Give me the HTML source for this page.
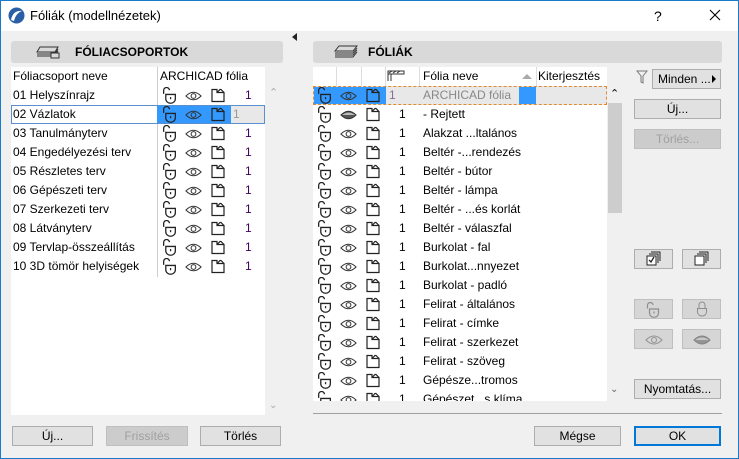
<!DOCTYPE html>
<html><head><meta charset="utf-8"><style>
*{margin:0;padding:0;box-sizing:border-box}
body{width:739px;height:459px;overflow:hidden;font-family:"Liberation Sans",sans-serif;font-size:12px;color:#000;background:#f0f0f0;position:relative}
.a{position:absolute}
.frame{left:0;top:0;width:739px;height:459px;border:1px solid #1979ca;pointer-events:none}
.title{left:0;top:0;width:739px;height:31px;background:#fff}
.hdr{background:#d9d9d9;border-radius:3px;height:22px;font-weight:bold;font-size:12px;line-height:22px}
.btn{background:#e1e1e1;border:1px solid #adadad;text-align:center;line-height:18px;height:20px}
.dis{color:#a0a0a0;background:#cccccc;border-color:#bfbfbf}
.row{position:absolute;height:19px;line-height:19px;white-space:nowrap}
svg.i{position:absolute}
</style></head><body>
<svg width="0" height="0" style="position:absolute">
<defs>
<symbol id="lk" viewBox="0 0 16 16"><path d="M2.5 6.5 V3.5 A2.7 2.7 0 0 1 8 3" fill="none" stroke="#222" stroke-width="1.2"/><path d="M4.5 7 H13.5 V11 A4.5 4.3 0 0 1 4.5 11 Z" fill="none" stroke="#222" stroke-width="1.2"/><line x1="9" y1="9.5" x2="9" y2="11.5" stroke="#222" stroke-width="1.2"/></symbol>
<symbol id="ey" viewBox="0 0 18 12"><path d="M1 6 Q9 -2 17 6 Q9 14 1 6 Z" fill="none" stroke="#333" stroke-width="1.1"/><circle cx="9" cy="6" r="2.5" fill="none" stroke="#333" stroke-width="1.1"/></symbol>
<symbol id="eh" viewBox="0 0 18 12"><path d="M1 6 Q9 -2 17 6 Q9 14 1 6 Z" fill="#555" stroke="#333" stroke-width="1"/><path d="M2 6 Q9 1 16 6" fill="#bbb"/></symbol>
<symbol id="dc" viewBox="0 0 16 16"><path d="M2 2.5 H7 V5.5 H14 V14.5 H2 Z M7 5.5 L10 2.5 H11 L14 5.5" fill="none" stroke="#222" stroke-width="1.2"/></symbol>
</defs></svg>

<div class="a title"></div>
<svg class="a" style="left:8px;top:7px" width="17" height="17" viewBox="0 0 17 17"><circle cx="8.5" cy="8.5" r="8" fill="#2a5fa8"/><path d="M3 13 Q5 3 14 4 Q8 6 6 14 Z" fill="#fff"/></svg>
<div class="a" style="left:30px;top:8px;font-size:13px">Fóliák (modellnézetek)</div>
<div class="a" style="left:654px;top:8px;font-size:14px">?</div>
<svg class="a" style="left:709px;top:9px" width="12" height="12" viewBox="0 0 12 12"><path d="M1 1 L11 11 M11 1 L1 11" stroke="#000" stroke-width="1.1"/></svg>

<div class="a" style="left:292px;top:33px;width:0;height:0;border-top:4px solid transparent;border-bottom:4px solid transparent;border-right:5px solid #222"></div>

<!-- LEFT -->
<div class="a hdr" style="left:11px;top:41px;width:272px"><span style="position:absolute;left:64px">FÓLIACSOPORTOK</span></div>
<svg class="a" style="left:36px;top:45px" width="26" height="14" viewBox="0 0 26 14"><path d="M4 2 H22 L19 7 H1 Z M1 9 H19 L22 4 M1 11 H19 L22 6" fill="none" stroke="#333" stroke-width="1"/><rect x="15" y="8" width="8" height="5" fill="#d9d9d9" stroke="#333"/></svg>
<div class="a" style="left:11px;top:67px;width:254px;height:348px;background:#fff"></div>
<div class="a" style="left:157px;top:67px;width:1px;height:210px;background:#ccc"></div>
<div class="a" style="left:13px;top:69px">Fóliacsoport neve</div>
<div class="a" style="left:160px;top:69px">ARCHICAD fólia</div>
<div class="a" style="left:265px;top:86px;width:18px;height:329px;background:#f0f0f0"></div>
<div class="a" style="left:269px;top:86px;color:#aaa;font-size:11px">⌃</div>
<div class="a" style="left:269px;top:400px;color:#aaa;font-size:10px">⌄</div>
<div class="a" style="left:11px;top:105px;width:254px;height:19px;border:1px solid #5a8fd0"></div>
<div class="a" style="left:157px;top:106px;width:74px;height:17px;background:#3399ff"></div>
<div class="a" style="left:231px;top:106px;width:33px;height:17px;background:#e8e8e8"></div>
<div id="L"></div>

<div class="a btn" style="left:12px;top:426px;width:81px">Új...</div>
<div class="a btn dis" style="left:106px;top:426px;width:82px">Frissítés</div>
<div class="a btn" style="left:200px;top:426px;width:81px">Törlés</div>

<!-- RIGHT -->
<div class="a hdr" style="left:313px;top:41px;width:409px"><span style="position:absolute;left:55px">FÓLIÁK</span></div>
<svg class="a" style="left:334px;top:45px" width="24" height="14" viewBox="0 0 24 14"><path d="M5 1 H23 L19 6 H1 Z M1 8 H19 L23 3 M1 10 H19 L23 5 M1 12 H19 L23 7" fill="none" stroke="#333" stroke-width="1"/></svg>
<div class="a" style="left:313px;top:67px;width:294px;height:334px;background:#fff;overflow:hidden" id="R">
</div>
<div class="a" style="left:607px;top:86px;width:15px;height:315px;background:#f0f0f0"></div>
<div class="a" style="left:608px;top:103px;width:14px;height:110px;background:#cdcdcd"></div>
<div class="a" style="left:610px;top:87px;font-size:11px">⌃</div>
<div class="a" style="left:610px;top:384px;font-size:10px;color:#666">⌄</div>

<svg class="a" style="left:636px;top:70px" width="12" height="14" viewBox="0 0 12 14"><path d="M1 1 H11 L7 6 V13 L5 12 V6 Z" fill="none" stroke="#777" stroke-width="1"/></svg>
<div class="a btn" style="left:652px;top:69px;width:69px;text-align:left;padding-left:5px">Minden ...<span style="position:absolute;right:4px;top:5px;width:0;height:0;border-top:4px solid transparent;border-bottom:4px solid transparent;border-left:4px solid #000"></span></div>
<div class="a btn" style="left:634px;top:99px;width:87px">Új...</div>
<div class="a btn dis" style="left:634px;top:129px;width:87px">Törlés...</div>

<div class="a btn" style="left:634px;top:249px;width:39px"></div>
<div class="a btn" style="left:682px;top:249px;width:39px"></div>
<svg class="a" style="left:646px;top:251px" width="15" height="15" viewBox="0 0 15 15"><path d="M5 1 H14 V10 M3 3 H12 V12" fill="none" stroke="#222"/><rect x="1" y="5" width="9" height="9" fill="#fff" stroke="#222"/><path d="M3 9 L5 11 L8 6" fill="none" stroke="#222" stroke-width="1.3"/></svg>
<svg class="a" style="left:694px;top:251px" width="15" height="15" viewBox="0 0 15 15"><path d="M5 1 H14 V10 M3 3 H12 V12" fill="none" stroke="#222"/><rect x="1" y="5" width="9" height="9" fill="#fff" stroke="#222"/></svg>
<div class="a btn dis" style="left:634px;top:299px;width:39px;background:#d6d6d6"></div>
<div class="a btn dis" style="left:682px;top:299px;width:39px;background:#d6d6d6"></div>
<div class="a btn dis" style="left:634px;top:329px;width:39px;background:#d6d6d6"></div>
<div class="a btn dis" style="left:682px;top:329px;width:39px;background:#d6d6d6"></div>
<svg class="i" style="left:645px;top:302px;opacity:.4" width="16" height="16"><use href="#lk"/></svg>
<svg class="i" style="left:694px;top:301px;opacity:.4" width="16" height="16" viewBox="0 0 16 16"><path d="M5 7 V4 A3 3 0 0 1 11 4 V7" fill="none" stroke="#222"/><path d="M3.5 7.5 H12.5 V11 A4.5 4 0 0 1 3.5 11 Z" fill="none" stroke="#222"/></svg>
<svg class="i" style="left:645px;top:334px;opacity:.4" width="18" height="12"><use href="#ey"/></svg>
<svg class="i" style="left:693px;top:334px;opacity:.5" width="18" height="12"><use href="#eh"/></svg>
<div class="a btn" style="left:634px;top:379px;width:87px">Nyomtatás...</div>

<div class="a" style="left:313px;top:413px;width:409px;height:1px;background:#a0a0a0"></div>
<div class="a btn" style="left:534px;top:426px;width:87px">Mégse</div>
<div class="a btn" style="left:634px;top:426px;width:87px;border:2px solid #0078d7;line-height:16px">OK</div>
<div class="frame a"></div>

<script>
var L=["01 Helyszínrajz","02 Vázlatok","03 Tanulmányterv","04 Engedélyezési terv","05 Részletes terv","06 Gépészeti terv","07 Szerkezeti terv","08 Látványterv","09 Tervlap-összeállítás","10 3D tömör helyiségek"];
var h="";
L.forEach(function(t,i){var y=86+i*19;var sel=i==1;
h+='<div class="row" style="left:13px;top:'+y+'px">'+t+'</div>';
h+='<svg class="i" style="left:161px;top:'+(y+1)+'px" width="17" height="17"><use href="#lk"/></svg>';
h+='<svg class="i" style="left:185px;top:'+(y+4)+'px" width="17" height="12"><use href="#ey"/></svg>';
h+='<svg class="i" style="left:210px;top:'+(y+1)+'px" width="16" height="16"><use href="#dc"/></svg>';
h+='<div class="row" style="left:'+(sel?233:245)+'px;top:'+y+'px;color:'+(sel?'#999':'#400060')+'">1</div>';});
document.getElementById('L').outerHTML=h;
var R=["ARCHICAD fólia","- Rejtett","Alakzat ...ltalános","Beltér -...rendezés","Beltér - bútor","Beltér - lámpa","Beltér - ...és korlát","Beltér - válaszfal","Burkolat - fal","Burkolat...nnyezet","Burkolat - padló","Felirat - általános","Felirat - címke","Felirat - szerkezet","Felirat - szöveg","Gépésze...tromos","Gépészet...s klíma"];
var r='<div class="a" style="left:0;top:0;width:294px;height:19px;background:#fff"></div>';
[23,48,72,106,223].forEach(function(x){r+='<div class="a" style="left:'+x+'px;top:0;width:1px;height:19px;background:#ddd"></div>'});
r+='<svg class="a" style="left:74px;top:3px" width="18" height="12" viewBox="0 0 18 12"><rect x="1" y="1" width="16" height="3" fill="none" stroke="#333"/><path d="M1 4 V11 M4 4 V11 M2 3 L5 1 M6 3 L9 1 M10 3 L13 1" stroke="#333" fill="none"/></svg>';
r+='<div class="row" style="left:110px;top:0">Fólia neve</div><div class="a" style="left:209px;top:7px;border-left:5px solid transparent;border-right:5px solid transparent;border-bottom:5px solid #aaa"></div>';
r+='<div class="row" style="left:225px;top:0">Kiterjesztés</div>';
r+='<div class="a" style="left:0;top:19px;width:294px;height:19px;background:#e8e8e8;border:1px dashed #e08a30"></div><div class="a" style="left:1px;top:20px;width:72px;height:17px;background:#3399ff"></div><div class="a" style="left:206px;top:20px;width:17px;height:17px;background:#3399ff"></div>';
R.forEach(function(t,i){var y=19+i*19;var sel=i==0;
r+='<svg class="i" style="left:3px;top:'+(y+1)+'px" width="17" height="17"><use href="#lk"/></svg>';
r+='<svg class="i" style="left:27px;top:'+(y+4)+'px" width="17" height="12"><use href="#'+(i==1?'eh':'ey')+'"/></svg>';
r+='<svg class="i" style="left:52px;top:'+(y+1)+'px" width="16" height="16"><use href="#dc"/></svg>';
r+='<div class="row" style="left:'+(sel?76:86)+'px;top:'+y+'px;color:'+(sel?'#8a6a9a':'#000')+'">1</div>';
r+='<div class="row" style="left:110px;top:'+y+'px;color:'+(sel?'#888':'#000')+'">'+t+'</div>';});
document.getElementById('R').innerHTML=r;
</script>
</body></html>
